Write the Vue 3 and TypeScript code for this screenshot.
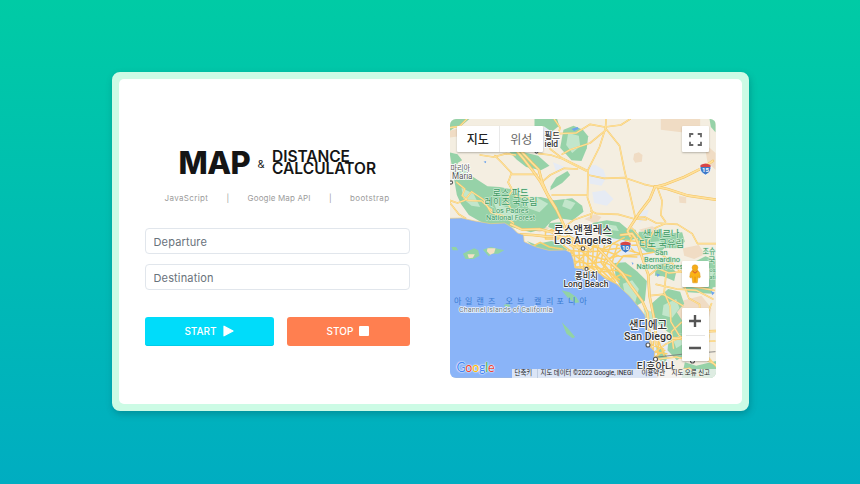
<script setup lang="ts">
interface MapLabel {
  text: string
  x: number
  y: number
  size: number
  width: number
  kind: string
}

const tags: string[] = ['JavaScript', '|', 'Google Map API', '|', 'bootstrap']

const labels: MapLabel[] = [
  { text: '필드', x: 544, y: 138.5, size: 9, width: 15.5, kind: 'city' },
  { text: 'ield', x: 544, y: 147.3, size: 8.5, width: 13.5, kind: 'city' },
  { text: '마리아', x: 450, y: 170.5, size: 8.5, width: 19.5, kind: 'town' },
  { text: 'Maria', x: 451.5, y: 178.7, size: 8.3, width: 20.5, kind: 'town' },
  { text: '로스 파드', x: 492, y: 195.5, size: 9.5, width: 36, kind: 'park' },
  { text: '레이즈 국유림', x: 484, y: 205, size: 9.5, width: 53, kind: 'park' },
  { text: 'Los Padres', x: 491.5, y: 213, size: 7.3, width: 36.5, kind: 'park' },
  { text: 'National Forest', x: 485.5, y: 220.3, size: 7.3, width: 49, kind: 'park' },
  { text: '로스앤젤레스', x: 553.5, y: 233.5, size: 11, width: 58, kind: 'city' },
  { text: 'Los Angeles', x: 553.5, y: 244, size: 10.5, width: 58, kind: 'city' },
  { text: '롱비치', x: 574.5, y: 278.5, size: 9, width: 23, kind: 'city' },
  { text: 'Long Beach', x: 563, y: 287.3, size: 9, width: 45, kind: 'city' },
  { text: '샌 베르나', x: 642, y: 237, size: 9.5, width: 37, kind: 'park' },
  { text: '디노 국유림', x: 638.5, y: 246.5, size: 9.5, width: 45, kind: 'park' },
  { text: 'San', x: 654.5, y: 254.5, size: 7.3, width: 12.5, kind: 'park' },
  { text: 'Bernardino', x: 643.5, y: 262, size: 7.3, width: 36, kind: 'park' },
  { text: 'National Forest', x: 636, y: 269.3, size: 7.3, width: 49, kind: 'park' },
  { text: '조슈', x: 702, y: 254, size: 8, width: 13, kind: 'park' },
  { text: '국', x: 707.5, y: 263, size: 8, width: 7.5, kind: 'park' },
  { text: 'os', x: 709, y: 271.5, size: 6, width: 6, kind: 'park' },
  { text: 'ati', x: 709, y: 278.5, size: 6, width: 6, kind: 'park' },
  { text: '샌디에고', x: 628.5, y: 329, size: 11, width: 38, kind: 'city' },
  { text: 'San Diego', x: 623.5, y: 340.2, size: 10.5, width: 48, kind: 'city' },
  { text: '티후아나', x: 636, y: 370, size: 10.5, width: 38, kind: 'city' },
]

const seaLetters: [string, number][] = [
  ['아', 453.5], ['일', 464.5], ['랜', 476], ['즈', 487.5], ['오', 505], ['브', 516.5],
  ['캘', 533.5], ['리', 545.5], ['포', 556], ['니', 567.5], ['아', 579],
]

// Terrain and roads are plotted at three units per map pixel.
const woods: string[] = [
  'M0 0H60L38 18 18 24 0 36z', 'M255 0h68l6 20-22 18-24-16-28 4z',
  'M342 32l30-12 28 12 16 20-4 36-16 38-30-2-34-38z',
  'M180 100l36-2 50 12 34 30-26 14-44-10-28-22z',
  'M304 202l16-26 34-20 8 12-24 24-36 22z',
  'M0 100l24 6 14 18-14 8 10 28 28 8 52 34 36 2 32 6 46 26 46-2 40 10 54-6 30 22 4 18-32 26-42-6-22 8-20 22-42 12-72-20-68-6-46-26-24-34-12-26z',
  'M428 312l44-8 38 6 24 20 24 2 8 24-30 10-46-8-52-20z',
  'M300 312l34-2 6 10-22 12-22-8z', 'M232 366l24 10 50-10 26 8 22 18-14 10-38-2-46-14z',
  'M568 338l34 0 42 6 54-4 8 28-26 20-34-2-16 16-38-2-30-24z',
  'M494 432l34-2 36 28 28 28-6 60-28 16-38-38-22-52z',
  'M620 436l34-4 26 28-6 26-34-14-24-2z', 'M700 506l38-8 52 4-4 22-70-4z',
  'M604 556l52-46 36 8 12 36-22 26 22 34-6 30-42-4-28-24-16-28z',
  'M660 636l42 10v64l-20 14-28-30z', 'M740 426l28-14 30 12v80l-24 4-26-28z',
  'M620 680l18 8 16 28-10 20-20-20z', 'M706 730l34 10 60-14v52H696z', 'M780 0h18v40l-14-16z',
]

const paleWoods: string[] = [
  'M356 42l32 8 4 32-24 20-18-24z', 'M14 132l40 16 8 26-20 4-30-28z', 'M36 206l36 18 20 40-26-4-24-20z',
  'M132 250l38 14 44 34-24 8-44-22z', 'M230 246l34-10 32 18-26 26-34-12z', 'M346 240l32 12-14 20-26-10z',
  'M470 316l30 4 8 16-32-4z', 'M520 494l28-10 20 26-12 44-30-28z', 'M582 568l28 12 18 40-20 10-20-24z',
  'M642 558l38-18 10 28-22 28-30-8z', 'M670 660l24-12 6 28-20 12z', 'M600 370l32-4 20 16-38 8z', 'M754 454l22-10 18 18-14 18z',
]

const highways: string[] = [
  'M186 78l38 44 28 36 22 32 24 46 24 38 20 42 10 28 22 26 14 18',
  'M216 98l32 34 20 20 10 38 14 32 28 46', 'M790 126l-34 22-52 26-56 22-32 8-16 38-32 42-34 52 8 16',
  'M616 202l38 8 62 20 82 12', 'M448 390l40 44 32 30 24 36 34 46 16 36 4 44 6 60 16 46',
  'M214 346l36 2 38 4 46 2 30 2 32 16 26 24', 'M184 316l34 16 52-2 38 10 36 22 28 22 42 2',
  'M514 348l34-4 14 20 18 58 16 44 4 64 16 80 4 66', 'M600 650l38 6 52 2 60-20 48-2',
]

const roads: string[] = [
  'M92 108l40 6 38-10 28 4', 'M136 110l22 22 28 30-10 28 12 24-18 30 14 26', 'M186 166h76', 'M176 190l24 42 34 4 28 12',
  'M0 244l24 8 22-8 20-26 36 24 22 38 40 12 28 20', 'M22 190l24 20-8 20 16 14 42 2 48 44', 'M308 228h104',
  'M276 190l26-22 42-20 40 2', 'M268 104l36 4 36 12 30 16 40 20', 'M320 42l-20 20 2 28 34 26 80 40',
  'M314 0l18 26-6 18 54-2 42-26 44 8 48-6 28-18',
  'M470 0l-2 28-18 56-34 68-2 84 14 42-4 18', 'M468 28l42 52 14 70 34 148', 'M468 34l-46 38-60 20-24 14',
  'M416 168l48 10 62-2 58 20 36 8', 'M424 276l18 8 64 2 50 14 34 2', 'M426 284l-52 18-24 18',
  'M556 296l30-2 34 18 64 4 44 28 16 30 56 0', 'M624 206l14 40-4 42 14 20', 'M548 328l32 38 48 34 26 20',
  'M614 444l44 18 44-4 24-20', 'M646 314l-28 12-16 30-20 26', 'M600 468l30-24 36-14 22 24 28 14 12 34 66 12',
  'M620 496l62 14 58 4 50 26', 'M602 530l38-4 60 34', 'M650 462l-6 58 18 42 2 46 24 40 20 20',
  'M704 500l14 38 32 18 2 32', 'M786 554l-20 48 12 48-8 58 30 34', 'M612 702l36-26 40-18 38 12 70-4',
  'M628 720l52-6 34 8 36-10 50 26', 'M620 730l58 26 42-8 38 28', 'M696 610l-30 28 6 50', 'M0 250l28 36 20 12', 'M0 26l30-4 22-22',
]

const cityStreets: string[] = [
  'M354 362l60 10 56-4 44 12 50-2 48 10', 'M360 378l62 2 44 12 46-4 68 18 32-6', 'M356 394l48 4 66-2 40 16 52 2',
  'M366 410l48-2 54 14 38-12', 'M374 426l42 8 44-6 40 18', 'M378 444l50-2 38 10 46 4', 'M370 370l8 74 22 12',
  'M386 370l6 74 20 22', 'M402 370v88l24 14', 'M418 366l-4 90 34 24', 'M432 376l-4 68 38 40', 'M448 370l-10 74 34 44',
  'M468 364l-14 66 44 58', 'M486 374l-24 60 46 56', 'M504 376l-20 68 12 28', 'M364 400l74 56 70 44',
  'M372 372l96 94 42 40', 'M422 364l70 70 30 42', 'M356 356l-14 24 28 20', 'M392 454l84 4 34 24',
  'M376 436l58-54 40-20', 'M412 460l48-70 64-34', 'M444 474l34-54 62-46', 'M488 454l34-44 58-4', 'M474 486l46-22 24 8',
  'M288 340l18-8 26 10-2 18-42 0z', 'M246 384l26-14 28 14 38 6', 'M548 352l-12 28 20 20', 'M528 364l54 6',
  'M596 648l30 14 18 48M612 650l-2 76M628 650l-4 74M594 674l48 16M598 696l54 8M604 722l42-28M602 748l38-10',
]

const coast = 'M0 298l36-1 40 9 48 8 42-2 22 14 16 16 18 6 2 20 36 16 38 10 50-1 16 8 8 22 4 24 22 2 14 10 28-3 26 22 36 18 38 35 26 31 20 26 8 34 6 30 2 32 14 14-4 34 12 46H0z'
</script>

<template>
  <main class="page">
    <section class="card">
      <div class="planner">
        <h1 class="brand">
          <span class="brand-main">MAP</span>
          <span class="brand-and">&amp;</span>
          <span class="brand-side"><span class="side-top">DISTANCE</span><span class="side-bottom">CALCULATOR</span></span>
        </h1>
        <div class="tags"><span v-for="(tag, i) in tags" :key="i" :class="'tag-' + i">{{ tag }}</span></div>
        <form class="fields" @submit.prevent>
          <input type="text" placeholder="Departure" class="departure" />
          <input type="text" placeholder="Destination" />
          <div class="actions">
            <button type="button" class="start">
              <span>START</span>
              <svg width="11" height="12" viewBox="0 0 11 12"><path d="M1 1.2v9.6L10 6z" fill="#fff" stroke="#fff" stroke-width="1.2" stroke-linejoin="round" /></svg>
            </button>
            <button type="button" class="stop">
              <span>STOP</span>
              <svg width="10" height="10" viewBox="0 0 10 10"><rect width="10" height="10" rx="1" fill="#fff" /></svg>
            </button>
          </div>
        </form>
      </div>

      <div class="map">
        <svg class="canvas" viewBox="449.5 119 266 259" preserveAspectRatio="none">
          <rect x="449" y="118" width="268" height="261" fill="#f4eee1" />
          <g transform="translate(449 119) scale(.333333)">
            <g fill="#f0dcc4">
              <path d="M634 0h118v30l-38 12-80-10zM554 104l14-4 11 8-2 20-20 3-6-10zM688 231l22 3v19l-20-2zM764 72l34 30v50l-24-22zM568 332l40-10 24 12-38 12zM700 388l48-10 18 28-32 14-30-10zM686 548l70-18 30 38-16 60-66 18-28-44zM404 300l32-14 20 8-16 20zM0 36l32-10 28 6-20 18-40 6zM246 330l34-12 20 10-30 12z" />
            </g>
            <g fill="#e6ebf4">
              <path d="M258 32l42-12 26 24-10 38-42 8zM414 140l24-2 24 14 8 24-14 24-34-6-6-30zM428 220l38-6 26 26-20 20-38-8zM564 278l34-6-8 24-20 16zM310 130l36 14-24 18z" />
              <path d="M290 336l64-8 72 28 82 0 40 18 50-10 34 18-14 24-62 14-36 2 28 80-40-4-56-50-84-8-16-58-66-24zM580 610l60 26 24 46-6 60-42 20-24-82zM566 470l30 22-8 24-22-14z" />
            </g>
            <g fill="#96d2a8"><path v-for="wood in woods" :key="wood" :d="wood" /></g>
            <g fill="#c2e6cb"><path v-for="wood in paleWoods" :key="wood" :d="wood" /></g>
            <g fill="none" stroke-linecap="round" stroke-linejoin="round">
              <g stroke="#f5ca6e" stroke-width="5"><path v-for="road in roads" :key="road" :d="road" /></g>
              <g stroke="#ffe19b" stroke-width="3"><path v-for="road in roads" :key="road" :d="road" /></g>
              <g stroke="#fcd06c" stroke-width="4.6"><path v-for="street in cityStreets" :key="street" :d="street" /></g>
              <g stroke="#f2c25f" stroke-width="8"><path v-for="road in highways" :key="road" :d="road" /></g>
              <g stroke="#ffe09a" stroke-width="5"><path v-for="road in highways" :key="road" :d="road" /></g>
            </g>
            <path d="M606 716l90-10 102-8" fill="none" stroke="#777" stroke-width="2.5" />
            <path :d="coast" fill="#8ab4f8" stroke="#f2ce80" stroke-width="2" />
            <path d="M6 384l14 0 6 10-16 0zM40 404l16-8 18-8 12 6 4 16-18 10-24 0zM100 392l24-8 40 10-18 10-20 0-8 8zM162 559l12-6 10 8-12 4zM336 514l24 6 20 14 10 16-12 2-22-14zM337 610l18 18 22 26-8 4-18-14z" fill="#92d3a5" />
            <path d="M54 406l22 0-6 10-12 2zM114 388l24 0-4 14-12 5-10-10z" fill="#f5e0c5" />
            <path d="M102 128l8-2-1 7zM366 30l18-6 4 5-14 7zM620 463l12 4-8 7zM546 430l6 2-2 6zM784 516l12 5-8 8z" fill="#6fa5ed" />
          </g>
          <g class="shield">
            <g transform="translate(705 169)"><path d="M-5-4Q-2-5 0-5t5 1q2 7-5 10Q-7 3-5-4z" fill="#3e79c7" stroke="#fff" stroke-width=".7" /><path d="M-5-4Q0-7 5-4v2H-5z" fill="#d94646" /><text y="3" text-anchor="middle">15</text></g>
            <g transform="translate(625 247)"><path d="M-5-4Q-2-5 0-5t5 1q2 7-5 10Q-7 3-5-4z" fill="#3e79c7" stroke="#fff" stroke-width=".7" /><path d="M-5-4Q0-7 5-4v2H-5z" fill="#d94646" /><text y="3" text-anchor="middle">10</text></g>
          </g>
          <g fill="#fff" stroke="#555" stroke-width="1.1">
            <circle cx="582.5" cy="248.5" r="1.8" /><circle cx="586" cy="269" r="1.6" /><circle cx="647.5" cy="345" r="2" /><circle cx="655" cy="359.3" r="2" /><circle cx="536" cy="151.5" r="1.6" /><circle cx="450.5" cy="182.5" r="1.6" /><circle cx="692" cy="361" r="2" />
          </g>
          <text v-for="label in labels" :key="label.text" :x="label.x" :y="label.y" :font-size="label.size" :textLength="label.width" lengthAdjust="spacingAndGlyphs" :class="['label', label.kind]">{{ label.text }}</text>
          <text y="304" class="label sea"><tspan v-for="([letter, x]) in seaLetters" :key="x" :x="x">{{ letter }}</tspan></text>
          <text x="458.5" y="311.7" font-size="7.4" textLength="93.5" class="label isles">Channel Islands of California</text>
        </svg>

        <div class="map-types"><button type="button" class="active">지도</button><button type="button">위성</button></div>
        <button type="button" class="control fullscreen" aria-label="전체 화면">
          <svg width="13" height="13" viewBox="0 0 13 13"><path d="M1 4.3V1h3.3M8.7 1H12v3.3M12 8.7V12H8.7M4.3 12H1V8.7" fill="none" stroke="#666" stroke-width="1.8" /></svg>
        </button>
        <button type="button" class="control pegman" aria-label="스트리트 뷰">
          <svg width="12" height="20" viewBox="0 0 13 22"><path d="M3.4 7h6.2l2 2.5.7 5-1.5 1-.9-2-.9 7.2H4L3 13.5l-.8 2-1.5-1 .7-5z" fill="#fbb216" stroke="#dc981b" stroke-width=".6" /><path d="M3.7 7l2.8 2L9.3 7v1.6l-2.8 2.2-2.8-2.2z" fill="#dd6b28" /><circle cx="6.5" cy="4" r="3.2" fill="#f5ac19" stroke="#dc981b" stroke-width=".5" /><path d="M6.5 14v6" stroke="#d88b17" stroke-width="1" /></svg>
        </button>
        <div class="zoom">
          <button type="button" aria-label="확대"><svg width="12" height="12" viewBox="0 0 12 12"><path d="M6 0v12M0 6h12" stroke="#555" stroke-width="2.4" /></svg></button>
          <button type="button" aria-label="축소"><svg width="12" height="12" viewBox="0 0 12 12"><path d="M0 6h12" stroke="#555" stroke-width="2.4" /></svg></button>
        </div>
        <div class="google"><span class="b">G</span><span class="r">o</span><span class="y">o</span><span class="b">g</span><span class="g">l</span><span class="r">e</span></div>
        <div class="credits"><span class="keys">단축키</span><span class="copy">지도 데이터 ©2022 Google, INEGI</span><span class="terms">이용약관</span><span class="report">지도 오류 신고</span></div>
      </div>
    </section>
  </main>
</template>

<style>
body { margin: 0; }
</style>

<style scoped>
* { box-sizing: border-box; }
.page { width: 860px; height: 484px; padding-top: 72px; background: linear-gradient(#00cba5, #00adc1); font-family: Inter, "Noto Sans CJK KR", sans-serif; }
.card { width: 637px; height: 339px; margin: 0 auto; border: 7px solid #ccfbe5; border-radius: 8px; background: #ccfbe5; display: flex; position: relative; box-shadow: 1px 3px 7px rgba(0, 65, 75, .3); }
.card::before { content: ""; position: absolute; inset: 0; border-radius: 5px; background: #fff; }
.planner { position: relative; width: 331px; padding: 70px 40px 0 26px; }
.brand { margin: 0 0 0 34px; height: 26px; display: flex; align-items: flex-start; color: #151515; line-height: 1; }
.brand-main { width: 79px; font-size: 31px; font-weight: 800; letter-spacing: -.5px; line-height: 27px; }
.brand-and { width: 14.5px; padding-top: 10px; font-size: 11px; font-weight: 400; }
.brand-side { display: flex; flex-direction: column; padding-top: 2px; font-size: 15.5px; font-weight: 600; line-height: 12px; }
.side-top { letter-spacing: -.05px; }
.side-bottom { letter-spacing: .02px; }
.tags { height: 12px; margin: 17px 20px 0 20px; display: flex; justify-content: space-between; align-items: center; font-size: 8px; color: #9c9c9c; white-space: nowrap; letter-spacing: .15px; }
.tag-0, .tag-4 { letter-spacing: .35px; }
.fields { margin-top: 24px; display: flex; flex-direction: column; }
input { width: 265px; height: 26px; padding: 1px 8px 0; margin: 0 0 10px; border: 1.4px solid #e1e6ec; border-radius: 4px; outline: none; background: #fff; font: 400 11px Inter, sans-serif; color: #65707a; letter-spacing: .15px; }
input::placeholder { color: #69727b; opacity: 1; }
.actions { margin-top: 17px; width: 265px; display: flex; gap: 13px; }
.actions button { height: 29px; padding: 0 0 1px; border: 0; border-radius: 3px; color: #fff; font: 500 10px Inter, sans-serif; display: flex; justify-content: center; align-items: center; gap: 6px; }
.start { width: 129px; background: #00dcfa; box-shadow: inset 0 -1px #00cce8; }
.stop { width: 123px; background: #ff7f50; }
.map { position: relative; width: 266px; height: 259px; margin-top: 40px; border-radius: 6px; overflow: hidden; font-family: Roboto, "Noto Sans CJK KR", sans-serif; }
.canvas { display: block; width: 266px; height: 259px; }
.label { font-family: Roboto, "Noto Sans CJK KR", sans-serif; paint-order: stroke; stroke: #fff; stroke-width: 1.7px; stroke-linejoin: round; }
.city { fill: #333; font-weight: 500; }
.town { fill: #555; }
.park { fill: #3d9863; stroke: #d7f0dc; stroke-width: 1.2px; }
.sea { fill: #397bd1; stroke: #8ab4f8; stroke-width: .5px; font-size: 8px; }
.isles { fill: #6d7780; stroke: #e7f1ff; }
.shield text { fill: #fff; font: 700 6px Roboto, sans-serif; }
.map-types { position: absolute; left: 7px; top: 7px; width: 86px; height: 26px; display: flex; background: #fff; border-radius: 1px; box-shadow: 0 1px 2px rgba(0, 0, 0, .25); }
.map-types button { flex: 1; padding: 0 0 2px; border: 0; background: none; color: #666; font: 400 12px "Noto Sans CJK KR", sans-serif; }
.map-types .active { color: #222; font-weight: 500; border-right: 1px solid #e9e9e9; }
.control, .zoom { position: absolute; left: 232px; width: 27px; background: #fff; border: 0; border-radius: 1px; padding: 0; box-shadow: 0 1px 2px rgba(0, 0, 0, .25); }
.control { height: 26px; display: flex; align-items: center; justify-content: center; }
.fullscreen { top: 7px; }
.pegman { top: 142px; }
.zoom { top: 189px; height: 53px; display: flex; flex-direction: column; }
.zoom button { flex: 1; border: 0; padding: 0; background: none; display: flex; align-items: center; justify-content: center; position: relative; }
.zoom button + button::before { content: ""; position: absolute; top: 0; left: 4px; width: 19px; height: 1px; background: #e5e5e5; }
.google { position: absolute; left: 7px; top: 242px; line-height: 14px; font-size: 12.5px; font-family: Lato, sans-serif; font-weight: 400; letter-spacing: -.25px; text-shadow: 0 0 1px #fff, 0 0 1px #fff, 0 0 2px #fff; }
.b { color: #4285f4; }
.r { color: #ea4335; }
.y { color: #fbbc05; }
.g { color: #34a853; }
.credits { position: absolute; right: 0; bottom: 0; width: 204px; height: 9px; display: flex; background: rgba(245, 245, 245, .76); font-size: 6.4px; line-height: 9px; white-space: nowrap; color: #222; }
.credits span { padding-left: 3px; }
.keys { width: 25px; }
.copy { width: 102px; border-left: 1px solid #bfcce0; }
.terms { width: 30px; }
.report { width: 47px; }
</style>
